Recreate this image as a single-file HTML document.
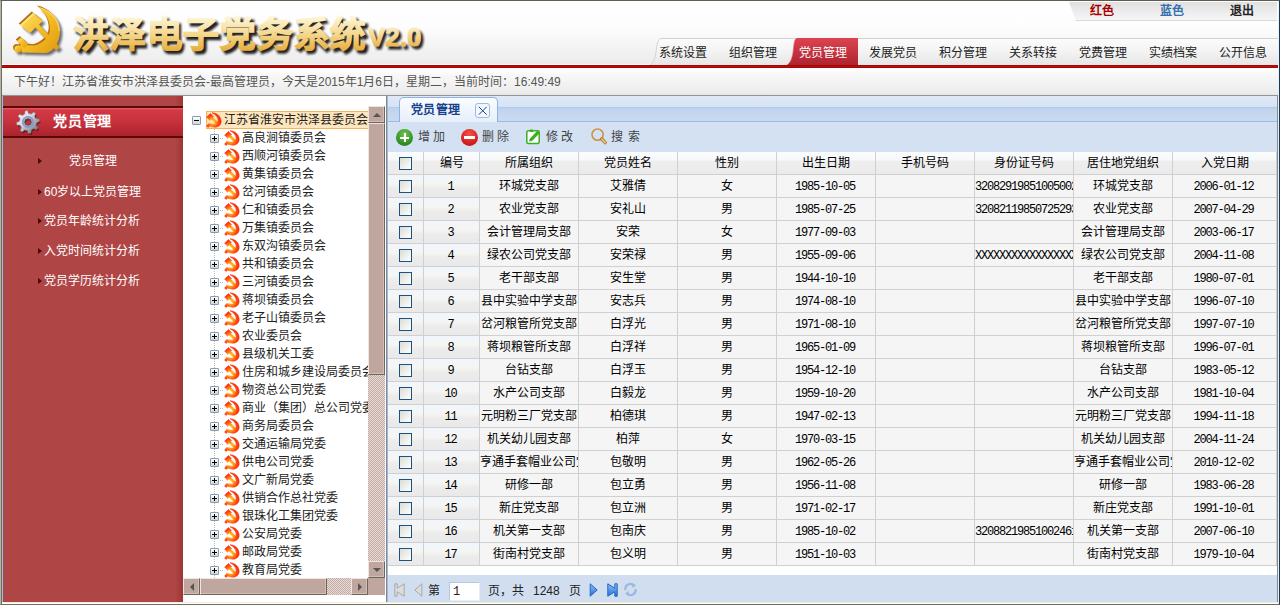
<!DOCTYPE html><html lang="zh-CN"><head><meta charset="utf-8"><style>*{margin:0;padding:0;box-sizing:border-box}
html,body{width:1280px;height:605px;overflow:hidden;background:#fff;font-family:"Liberation Sans",sans-serif;font-size:12px;color:#222}
div,span,i,b{position:absolute;display:block;font-style:normal}
#frame{left:0;top:0;width:1280px;height:605px;pointer-events:none;
 border-left:1px solid #b4b4a4;border-top:1px solid #5e5e50;border-right:1px solid #0a3c72;border-bottom:1px solid #6e6e60}
#frame:before{content:"";position:absolute;left:0;top:0;width:1px;height:604px;background:#6f6f60}
#hdr{left:1px;top:1px;width:1277px;height:64px;background:linear-gradient(#ffffff,#fdfdfd 40%,#ececec 98%,#fff 98%)}
#logo{left:8px;top:2px;width:60px;height:60px}
#toptab{left:0;top:0;width:1280px;height:24px}
#toptab .bg{left:1069px;top:2px;width:208px;height:19px;background:linear-gradient(#e0e0e0,#f6f6f6);border-bottom:1px solid #dadada;clip-path:polygon(0 0,100% 0,100% 100%,7px 100%)}
#toptab b{top:4px;font-size:12px;line-height:14px;font-weight:700}
#navbg{left:651px;top:38px;width:626px;height:27px;background:linear-gradient(#fbfbfb,#f2f2f2 50%,#e4e4e4);border-top:1px solid #d5d5d5;clip-path:polygon(6px 0,100% 0,100% 100%,0 100%)}
#navact{left:788px;top:38px;width:70px;height:27px;background:linear-gradient(#d9414b,#b2222c);clip-path:polygon(8px 0,100% 0,100% 100%,0 100%);border-radius:4px 0 0 0}
.nav{top:45.5px;font-size:12px;line-height:14px;color:#222;white-space:nowrap}
.nav.on{color:#fff}
#redline{left:2px;top:65px;width:1276px;height:3px;background:linear-gradient(#a60000,#b01010 50%,#a60000)}
#info{left:2px;top:68px;width:1276px;height:27px;background:linear-gradient(#ffffff,#f7f7f7 30%,#ededed 90%,#e4e4e4);padding-left:12px;line-height:29px;color:#555;font-size:12px;white-space:nowrap}
#infoline{left:2px;top:95px;width:1276px;height:1px;background:#959595}
#rline{left:1277px;top:95px;width:1px;height:507px;background:#8a8a8a}
#cream{left:1278px;top:1px;width:1px;height:603px;background:#f4efdc}
#bcream{left:2px;top:602px;width:1277px;height:1px;background:#f0ecd8}
#side{left:2px;top:96px;width:181px;height:506px;background:linear-gradient(90deg,rgba(0,0,0,0) 172px,rgba(90,0,10,0.22) 180px),#b04545;border-left:1px solid #99bbe8}
#side .hd{left:0;top:10px;width:180px;height:32px;background:linear-gradient(#e8606a,#d23a44 2px,#c6313b 50%,#aa232d);border-top:2px solid #5e0808;border-bottom:2px solid #5e0808}
#gear{left:15px;top:109px;width:26px;height:26px}
#sidetitle{left:53px;top:113px;letter-spacing:0.8px;font-size:14px;font-weight:700;color:#fff;line-height:16px;white-space:nowrap}
.arr{left:38px;width:4px;height:6px;background:#4a0a0a;clip-path:polygon(0 0,100% 50%,0 100%)}
.si{font-size:12px;color:#fff;line-height:14px;white-space:nowrap}
#tree{left:183px;top:96px;width:185px;height:482px;overflow:hidden;background:#fff}
.tb{width:9px;height:9px;border:1px solid #7f9db9;border-radius:1px;background:linear-gradient(#fff,#d8d4c8)}
.tb:before{content:"";position:absolute;left:1px;top:3px;width:5px;height:1px;background:#000}
.tb:after{content:"";position:absolute;left:3px;top:1px;width:1px;height:5px;background:#000}
.tb.minus:after{display:none}
.rootsel{left:23px;top:15px;width:190px;height:18px;background:#fde6bd;border:1px solid #f8b155}
.ic{width:16px;height:16px;margin-top:1px}
.tl{font-size:12px;line-height:20px;color:#222;white-space:nowrap}
.vdots{left:31px;top:33px;width:1px;height:460px;background:repeating-linear-gradient(#b8b8b8 0 1px,transparent 1px 2px)}
.hd2{left:37px;width:4px;height:1px;background:repeating-linear-gradient(90deg,#b8b8b8 0 1px,transparent 1px 2px)}
#vsb{left:368px;top:106px;width:17px;height:472px;background:repeating-conic-gradient(#c4aca5 0 25%,#e6dbd6 0 50%) 0 0/2px 2px}
#vsb .btn,#hsb .btn,#vsb .thumb,#hsb .thumb{background:#bfa69f;border:1px solid;border-color:#efe4de #6a665a #6a665a #efe4de;box-shadow:inset -1px -1px #d4bdb5}
#vsb .up{left:0;top:0;width:17px;height:17px}
#vsb .thumb{left:0;top:17px;width:17px;height:252px}
#vsb .dn{left:0;top:455px;width:17px;height:17px}
#hsb{left:183px;top:578px;width:185px;height:17px;background:repeating-conic-gradient(#c4aca5 0 25%,#e6dbd6 0 50%) 0 0/2px 2px}
#hsb .lf{left:0;top:0;width:17px;height:17px}
#hsb .thumb{left:17px;top:0;width:127px;height:17px}
#hsb .rt{left:168px;top:0;width:17px;height:17px}
#corner{left:368px;top:578px;width:17px;height:17px;background:#bfa69f}
.btn i{left:4px;top:6px;width:0;height:0;border:4px solid transparent}
.up i{border-bottom:4px solid #555;border-top:0;left:4px;top:6px}
.dn i{border-top:4px solid #555;border-bottom:0;left:4px;top:6px}
.lf i{border-right:4px solid #555;border-left:0;left:6px;top:4px}
.rt i{border-left:4px solid #555;border-right:0;left:6px;top:4px}
#treeline{left:385px;top:96px;width:1px;height:506px;background:#fff}
#main{left:386px;top:96px;width:891px;height:506px;background:#fff;border-left:1px solid #868686;}
#main:before{content:"";position:absolute;left:0;top:0;width:1px;height:506px;background:#99bbe8}
#tabstrip{left:1px;top:0;width:890px;height:26px;background:linear-gradient(#e0e9f6,#d6e2f3 11px,#a9c4e9 11px,#bcd1ed 12px,#c3d6ef 16px,#c9daf0 25px);border-bottom:1px solid #99bbe8}
#tab{left:12px;top:1px;width:99px;height:25px;border:1px solid #8db2e3;border-bottom:0;border-radius:5px 5px 0 0;background:linear-gradient(#fafcff,#e6effa)}
#tab span{left:11px;top:6px;letter-spacing:0.4px;font-size:12px;font-weight:700;color:#15428b;line-height:13px}
#tab .x{left:75px;top:5px;width:15px;height:15px;border:1px solid #99bbe8;border-radius:3px;background:#f4f8fd}
#tab .x svg{position:absolute;left:0;top:0}
#tbar{left:1px;top:26px;width:890px;height:30px;background:#d3e1f2}
#grid{left:388px;top:152px;width:889px;height:423px;background:#fff;overflow:hidden}
.gh{left:0;top:0;width:889px;height:23px;background:linear-gradient(#fbfcfd,#f6f8fa 36%,#eeeeee 42%,#ebebeb);border-bottom:1px solid #d0d0d0}
.gr{left:0;width:889px;height:23px;background:#f5f5f5;border-bottom:1px solid #d0d0d0}
.c{top:0;height:22px;border-right:1px solid #d0d0d0;text-align:center;line-height:22px;white-space:nowrap;overflow:hidden;color:#000}
.c span{position:relative;display:inline}
.c.num{font-family:"Liberation Mono",monospace;font-size:12px;letter-spacing:-1.2px}
.c.id{text-align:left;font-family:"Liberation Mono",monospace;font-size:12px;letter-spacing:-1.2px;overflow:hidden}
.cb{left:11px;top:5px;width:13px;height:13px;border:1px solid #1c5180;background:linear-gradient(135deg,#dcdcd4,#ffffff)}
#pager{left:388px;top:575px;width:889px;height:27px;background:#d0def0}
#tools span{white-space:nowrap}

.c.num span,.c.id span{top:1px}
.c.num span{left:-1px}

.gr .rn{background:linear-gradient(#f1f6fc,#f5f5f3 40%,#ececec 60%,#e9e9e9)}
</style></head><body>
<svg width="0" height="0" style="position:absolute"><defs><radialGradient id="hg" cx="0.42" cy="0.6" r="0.68"><stop offset="0" stop-color="#ffe030"/><stop offset="0.3" stop-color="#ff9a1a"/><stop offset="0.65" stop-color="#ff4010"/><stop offset="1" stop-color="#f01808"/></radialGradient></defs></svg>
<div id="hdr"></div>
<div id="logo"><svg width="60" height="60" viewBox="0 0 60 60"><defs><linearGradient id="lg" x1="0" y1="0" x2="1" y2="1"><stop offset="0" stop-color="#ffe068"/><stop offset="0.5" stop-color="#f4bc22"/><stop offset="1" stop-color="#e09810"/></linearGradient><filter id="lb"><feGaussianBlur stdDeviation="1.1"/></filter>
</defs>
<g transform="translate(2.5,2.5)" fill="#282838" opacity="0.65" filter="url(#lb)"><path d="M30,5 C42,7 52,17 52,29 C52,40 45,50 38,51 L14,50.5 L12,43 L27,43.5 C35,41 42,35 42,27 C42,18 37,10 30,5 Z"/><circle cx="10" cy="47" r="3.6"/><path d="M9,39 L13,35.5 L20,42 L16,46 Z"/>
<path d="M12,23 L25,11 L35,19 L31,22.5 L51.9,45.4 L48.1,48.6 L27.5,25.5 L22,31 Z"/></g>
<g transform="translate(-1.3,-1.5)" fill="#b87010"><path d="M30,5 C42,7 52,17 52,29 C52,40 45,50 38,51 L14,50.5 L12,43 L27,43.5 C35,41 42,35 42,27 C42,18 37,10 30,5 Z"/><circle cx="10" cy="47" r="3.6"/><path d="M9,39 L13,35.5 L20,42 L16,46 Z"/>
<path d="M12,23 L25,11 L35,19 L31,22.5 L51.9,45.4 L48.1,48.6 L27.5,25.5 L22,31 Z"/></g>
<g fill="url(#lg)"><path d="M30,5 C42,7 52,17 52,29 C52,40 45,50 38,51 L14,50.5 L12,43 L27,43.5 C35,41 42,35 42,27 C42,18 37,10 30,5 Z"/><circle cx="10" cy="47" r="3.6"/><path d="M9,39 L13,35.5 L20,42 L16,46 Z"/>
<path d="M12,23 L25,11 L35,19 L31,22.5 L51.9,45.4 L48.1,48.6 L27.5,25.5 L22,31 Z"/></g>
<path d="M12,23 L25,11 L26.5,12.2 L13.5,24.3Z" fill="#ffea90" opacity="0.8"/>
<path d="M30,5 C42,7 52,17 52,29 L50.5,29 C50.5,18 41,8 30,5Z" fill="#ffe890" opacity="0.6"/>
</svg>
</div>
<svg id="title" width="380" height="56" viewBox="0 0 380 56" style="position:absolute;left:60px;top:4px">
<defs><linearGradient id="tg" x1="0" y1="0" x2="0" y2="1"><stop offset="0.05" stop-color="#fdf6d8"/><stop offset="0.5" stop-color="#f4d68a"/><stop offset="0.95" stop-color="#e6a630"/></linearGradient>
<filter id="tb"><feGaussianBlur stdDeviation="0.8"/></filter></defs>
<g font-family="Liberation Sans, sans-serif" font-weight="700">
<g transform="translate(2.6,2.6)" fill="#202020" stroke="#202020" stroke-width="1.8" opacity="1" filter="url(#tb)">
<text x="13" y="43" font-size="35.5" letter-spacing="0.75">洪泽电子党务系统</text><text x="308" y="42" font-size="26" stroke-width="0.8">V2.0</text></g>
<g fill="url(#tg)" stroke="url(#tg)" stroke-width="1.4">
<text x="13" y="43" font-size="35.5" letter-spacing="0.75">洪泽电子党务系统</text><text x="308" y="42" font-size="26" stroke-width="0.8">V2.0</text></g>
</g></svg>

<div id="toptab"><div class="bg"></div><b style="left:1090px;color:#a80000">红色</b><b style="left:1160px;color:#3470b0">蓝色</b><b style="left:1230px;color:#222">退出</b></div>
<svg style="position:absolute;left:649px;top:38px" width="629" height="27" viewBox="0 0 629 27"><defs><linearGradient id="nbg" x1="0" y1="0" x2="0" y2="1"><stop offset="0" stop-color="#fcfcfc"/><stop offset="0.5" stop-color="#f3f3f3"/><stop offset="1" stop-color="#e6e6e6"/></linearGradient></defs><path d="M12,0.5 L629,0.5 L629,27 L1,27 C4,25 6,21 7,14 C8,6 9,1 12,0.5Z" fill="url(#nbg)"/><path d="M1,27 C4,25 6,21 7,14 C8,6 9,1 12,0.5 L629,0.5" fill="none" stroke="#d2d2d2" stroke-width="1"/></svg><svg style="position:absolute;left:786px;top:38px" width="72" height="27" viewBox="0 0 72 27"><defs><linearGradient id="ng" x1="0" y1="0" x2="0" y2="1"><stop offset="0" stop-color="#dc4450"/><stop offset="1" stop-color="#ae2430"/></linearGradient></defs><path d="M11,0 L72,0 L72,27 L1,27 C4,25 6,21 7,14 C8,6 8,1 11,0 Z" fill="url(#ng)"/><path d="M1,27 C4,25 6,21 7,14 C8,6 8,1 11,0" fill="none" stroke="#f07078" stroke-width="0.8" opacity="0.7"/></svg>
<span class="nav" style="left:659px">系统设置</span>
<span class="nav" style="left:729px">组织管理</span>
<span class="nav on" style="left:799px">党员管理</span>
<span class="nav" style="left:869px">发展党员</span>
<span class="nav" style="left:939px">积分管理</span>
<span class="nav" style="left:1009px">关系转接</span>
<span class="nav" style="left:1079px">党费管理</span>
<span class="nav" style="left:1149px">实绩档案</span>
<span class="nav" style="left:1219px">公开信息</span>
<div id="redline"></div>
<div id="info">下午好！江苏省淮安市洪泽县委员会-最高管理员，今天是2015年1月6日，星期二，当前时间：16:49:49</div>
<div id="infoline"></div>
<div id="side"><div class="hd"></div></div>
<div id="gear"><svg width="26" height="26" viewBox="0 0 26 26"><defs><linearGradient id="gg" x1="0" y1="0" x2="1" y2="1"><stop offset="0" stop-color="#ffffff"/><stop offset="0.45" stop-color="#d0d4dc"/><stop offset="1" stop-color="#5a606a"/></linearGradient></defs>
<g transform="translate(1,1.5)" opacity="0.5"><path fill="#200000" fill-rule="evenodd" d="M20.95,9.71 L24.11,10.01 L24.49,12.43 L21.57,13.69 L20.95,16.29 L22.96,18.74 L21.53,20.72 L18.58,19.55 L16.29,20.95 L15.99,24.11 L13.57,24.49 L12.31,21.57 L9.71,20.95 L7.26,22.96 L5.28,21.53 L6.45,18.58 L5.05,16.29 L1.89,15.99 L1.51,13.57 L4.43,12.31 L5.05,9.71 L3.04,7.26 L4.47,5.28 L7.42,6.45 L9.71,5.05 L10.01,1.89 L12.43,1.51 L13.69,4.43 L16.29,5.05 L18.74,3.04 L20.72,4.47 L19.55,7.42Z M16.30,13.00 A3.3,3.3 0 1 0 9.70,13.00 A3.3,3.3 0 1 0 16.30,13.00 Z"/></g>
<path fill="url(#gg)" fill-rule="evenodd" stroke="#7a8088" stroke-width="0.5" d="M20.95,9.71 L24.11,10.01 L24.49,12.43 L21.57,13.69 L20.95,16.29 L22.96,18.74 L21.53,20.72 L18.58,19.55 L16.29,20.95 L15.99,24.11 L13.57,24.49 L12.31,21.57 L9.71,20.95 L7.26,22.96 L5.28,21.53 L6.45,18.58 L5.05,16.29 L1.89,15.99 L1.51,13.57 L4.43,12.31 L5.05,9.71 L3.04,7.26 L4.47,5.28 L7.42,6.45 L9.71,5.05 L10.01,1.89 L12.43,1.51 L13.69,4.43 L16.29,5.05 L18.74,3.04 L20.72,4.47 L19.55,7.42Z M16.30,13.00 A3.3,3.3 0 1 0 9.70,13.00 A3.3,3.3 0 1 0 16.30,13.00 Z"/>
<circle cx="13" cy="13" r="5.2" fill="none" stroke="#8a98c8" stroke-width="1.8"/>
<circle cx="13" cy="13" r="3.3" fill="none" stroke="#404858" stroke-width="0.7"/></svg></div>
<div id="sidetitle">党员管理</div>
<i class="arr" style="top:158px"></i><span class="si" style="left:69px;top:154px">党员管理</span>
<i class="arr" style="top:189px"></i><span class="si" style="left:44px;top:185px">60岁以上党员管理</span>
<i class="arr" style="top:218px"></i><span class="si" style="left:44px;top:214px">党员年龄统计分析</span>
<i class="arr" style="top:248px"></i><span class="si" style="left:44px;top:244px">入党时间统计分析</span>
<i class="arr" style="top:278px"></i><span class="si" style="left:44px;top:274px">党员学历统计分析</span>
<div id="tree">
<div class="tb minus" style="left:9px;top:20px"></div>
<div class="rootsel"></div>
<div class="ic" style="left:23px;top:15px"><svg width="16" height="16" viewBox="0 0 16 16"><path fill="url(#hg)" stroke="url(#hg)" stroke-width="0.5" d="M6,0.8 C11,0.8 15.2,4.5 15.2,9.5 C15.2,13.2 12,15.3 8.5,15.3 L3.5,14.3 L2,15.5 L0.6,14 L2.5,11.6 L7.8,12 C10.3,12 12,10.3 12,8.3 C12,5.2 9.5,2.5 6,0.8Z M0.6,5 L4.5,1.6 L7.7,4.6 L6.8,5.5 L13.3,11.7 L11.5,13.4 L5,7.1 L3.8,8.4Z"/></svg>
</div>
<span class="tl" style="left:41px;top:14px">江苏省淮安市洪泽县委员会</span>
<div class="vdots"></div>
<div class="tb" style="left:27px;top:38px"></div><div class="hd2" style="top:42px"></div>
<div class="ic" style="left:41px;top:33px"><svg width="16" height="16" viewBox="0 0 16 16"><path fill="url(#hg)" stroke="url(#hg)" stroke-width="0.5" d="M6,0.8 C11,0.8 15.2,4.5 15.2,9.5 C15.2,13.2 12,15.3 8.5,15.3 L3.5,14.3 L2,15.5 L0.6,14 L2.5,11.6 L7.8,12 C10.3,12 12,10.3 12,8.3 C12,5.2 9.5,2.5 6,0.8Z M0.6,5 L4.5,1.6 L7.7,4.6 L6.8,5.5 L13.3,11.7 L11.5,13.4 L5,7.1 L3.8,8.4Z"/></svg>
</div>
<span class="tl" style="left:59px;top:32px">高良涧镇委员会</span>
<div class="tb" style="left:27px;top:56px"></div><div class="hd2" style="top:60px"></div>
<div class="ic" style="left:41px;top:51px"><svg width="16" height="16" viewBox="0 0 16 16"><path fill="url(#hg)" stroke="url(#hg)" stroke-width="0.5" d="M6,0.8 C11,0.8 15.2,4.5 15.2,9.5 C15.2,13.2 12,15.3 8.5,15.3 L3.5,14.3 L2,15.5 L0.6,14 L2.5,11.6 L7.8,12 C10.3,12 12,10.3 12,8.3 C12,5.2 9.5,2.5 6,0.8Z M0.6,5 L4.5,1.6 L7.7,4.6 L6.8,5.5 L13.3,11.7 L11.5,13.4 L5,7.1 L3.8,8.4Z"/></svg>
</div>
<span class="tl" style="left:59px;top:50px">西顺河镇委员会</span>
<div class="tb" style="left:27px;top:74px"></div><div class="hd2" style="top:78px"></div>
<div class="ic" style="left:41px;top:69px"><svg width="16" height="16" viewBox="0 0 16 16"><path fill="url(#hg)" stroke="url(#hg)" stroke-width="0.5" d="M6,0.8 C11,0.8 15.2,4.5 15.2,9.5 C15.2,13.2 12,15.3 8.5,15.3 L3.5,14.3 L2,15.5 L0.6,14 L2.5,11.6 L7.8,12 C10.3,12 12,10.3 12,8.3 C12,5.2 9.5,2.5 6,0.8Z M0.6,5 L4.5,1.6 L7.7,4.6 L6.8,5.5 L13.3,11.7 L11.5,13.4 L5,7.1 L3.8,8.4Z"/></svg>
</div>
<span class="tl" style="left:59px;top:68px">黄集镇委员会</span>
<div class="tb" style="left:27px;top:92px"></div><div class="hd2" style="top:96px"></div>
<div class="ic" style="left:41px;top:87px"><svg width="16" height="16" viewBox="0 0 16 16"><path fill="url(#hg)" stroke="url(#hg)" stroke-width="0.5" d="M6,0.8 C11,0.8 15.2,4.5 15.2,9.5 C15.2,13.2 12,15.3 8.5,15.3 L3.5,14.3 L2,15.5 L0.6,14 L2.5,11.6 L7.8,12 C10.3,12 12,10.3 12,8.3 C12,5.2 9.5,2.5 6,0.8Z M0.6,5 L4.5,1.6 L7.7,4.6 L6.8,5.5 L13.3,11.7 L11.5,13.4 L5,7.1 L3.8,8.4Z"/></svg>
</div>
<span class="tl" style="left:59px;top:86px">岔河镇委员会</span>
<div class="tb" style="left:27px;top:110px"></div><div class="hd2" style="top:114px"></div>
<div class="ic" style="left:41px;top:105px"><svg width="16" height="16" viewBox="0 0 16 16"><path fill="url(#hg)" stroke="url(#hg)" stroke-width="0.5" d="M6,0.8 C11,0.8 15.2,4.5 15.2,9.5 C15.2,13.2 12,15.3 8.5,15.3 L3.5,14.3 L2,15.5 L0.6,14 L2.5,11.6 L7.8,12 C10.3,12 12,10.3 12,8.3 C12,5.2 9.5,2.5 6,0.8Z M0.6,5 L4.5,1.6 L7.7,4.6 L6.8,5.5 L13.3,11.7 L11.5,13.4 L5,7.1 L3.8,8.4Z"/></svg>
</div>
<span class="tl" style="left:59px;top:104px">仁和镇委员会</span>
<div class="tb" style="left:27px;top:128px"></div><div class="hd2" style="top:132px"></div>
<div class="ic" style="left:41px;top:123px"><svg width="16" height="16" viewBox="0 0 16 16"><path fill="url(#hg)" stroke="url(#hg)" stroke-width="0.5" d="M6,0.8 C11,0.8 15.2,4.5 15.2,9.5 C15.2,13.2 12,15.3 8.5,15.3 L3.5,14.3 L2,15.5 L0.6,14 L2.5,11.6 L7.8,12 C10.3,12 12,10.3 12,8.3 C12,5.2 9.5,2.5 6,0.8Z M0.6,5 L4.5,1.6 L7.7,4.6 L6.8,5.5 L13.3,11.7 L11.5,13.4 L5,7.1 L3.8,8.4Z"/></svg>
</div>
<span class="tl" style="left:59px;top:122px">万集镇委员会</span>
<div class="tb" style="left:27px;top:146px"></div><div class="hd2" style="top:150px"></div>
<div class="ic" style="left:41px;top:141px"><svg width="16" height="16" viewBox="0 0 16 16"><path fill="url(#hg)" stroke="url(#hg)" stroke-width="0.5" d="M6,0.8 C11,0.8 15.2,4.5 15.2,9.5 C15.2,13.2 12,15.3 8.5,15.3 L3.5,14.3 L2,15.5 L0.6,14 L2.5,11.6 L7.8,12 C10.3,12 12,10.3 12,8.3 C12,5.2 9.5,2.5 6,0.8Z M0.6,5 L4.5,1.6 L7.7,4.6 L6.8,5.5 L13.3,11.7 L11.5,13.4 L5,7.1 L3.8,8.4Z"/></svg>
</div>
<span class="tl" style="left:59px;top:140px">东双沟镇委员会</span>
<div class="tb" style="left:27px;top:164px"></div><div class="hd2" style="top:168px"></div>
<div class="ic" style="left:41px;top:159px"><svg width="16" height="16" viewBox="0 0 16 16"><path fill="url(#hg)" stroke="url(#hg)" stroke-width="0.5" d="M6,0.8 C11,0.8 15.2,4.5 15.2,9.5 C15.2,13.2 12,15.3 8.5,15.3 L3.5,14.3 L2,15.5 L0.6,14 L2.5,11.6 L7.8,12 C10.3,12 12,10.3 12,8.3 C12,5.2 9.5,2.5 6,0.8Z M0.6,5 L4.5,1.6 L7.7,4.6 L6.8,5.5 L13.3,11.7 L11.5,13.4 L5,7.1 L3.8,8.4Z"/></svg>
</div>
<span class="tl" style="left:59px;top:158px">共和镇委员会</span>
<div class="tb" style="left:27px;top:182px"></div><div class="hd2" style="top:186px"></div>
<div class="ic" style="left:41px;top:177px"><svg width="16" height="16" viewBox="0 0 16 16"><path fill="url(#hg)" stroke="url(#hg)" stroke-width="0.5" d="M6,0.8 C11,0.8 15.2,4.5 15.2,9.5 C15.2,13.2 12,15.3 8.5,15.3 L3.5,14.3 L2,15.5 L0.6,14 L2.5,11.6 L7.8,12 C10.3,12 12,10.3 12,8.3 C12,5.2 9.5,2.5 6,0.8Z M0.6,5 L4.5,1.6 L7.7,4.6 L6.8,5.5 L13.3,11.7 L11.5,13.4 L5,7.1 L3.8,8.4Z"/></svg>
</div>
<span class="tl" style="left:59px;top:176px">三河镇委员会</span>
<div class="tb" style="left:27px;top:200px"></div><div class="hd2" style="top:204px"></div>
<div class="ic" style="left:41px;top:195px"><svg width="16" height="16" viewBox="0 0 16 16"><path fill="url(#hg)" stroke="url(#hg)" stroke-width="0.5" d="M6,0.8 C11,0.8 15.2,4.5 15.2,9.5 C15.2,13.2 12,15.3 8.5,15.3 L3.5,14.3 L2,15.5 L0.6,14 L2.5,11.6 L7.8,12 C10.3,12 12,10.3 12,8.3 C12,5.2 9.5,2.5 6,0.8Z M0.6,5 L4.5,1.6 L7.7,4.6 L6.8,5.5 L13.3,11.7 L11.5,13.4 L5,7.1 L3.8,8.4Z"/></svg>
</div>
<span class="tl" style="left:59px;top:194px">蒋坝镇委员会</span>
<div class="tb" style="left:27px;top:218px"></div><div class="hd2" style="top:222px"></div>
<div class="ic" style="left:41px;top:213px"><svg width="16" height="16" viewBox="0 0 16 16"><path fill="url(#hg)" stroke="url(#hg)" stroke-width="0.5" d="M6,0.8 C11,0.8 15.2,4.5 15.2,9.5 C15.2,13.2 12,15.3 8.5,15.3 L3.5,14.3 L2,15.5 L0.6,14 L2.5,11.6 L7.8,12 C10.3,12 12,10.3 12,8.3 C12,5.2 9.5,2.5 6,0.8Z M0.6,5 L4.5,1.6 L7.7,4.6 L6.8,5.5 L13.3,11.7 L11.5,13.4 L5,7.1 L3.8,8.4Z"/></svg>
</div>
<span class="tl" style="left:59px;top:212px">老子山镇委员会</span>
<div class="tb" style="left:27px;top:236px"></div><div class="hd2" style="top:240px"></div>
<div class="ic" style="left:41px;top:231px"><svg width="16" height="16" viewBox="0 0 16 16"><path fill="url(#hg)" stroke="url(#hg)" stroke-width="0.5" d="M6,0.8 C11,0.8 15.2,4.5 15.2,9.5 C15.2,13.2 12,15.3 8.5,15.3 L3.5,14.3 L2,15.5 L0.6,14 L2.5,11.6 L7.8,12 C10.3,12 12,10.3 12,8.3 C12,5.2 9.5,2.5 6,0.8Z M0.6,5 L4.5,1.6 L7.7,4.6 L6.8,5.5 L13.3,11.7 L11.5,13.4 L5,7.1 L3.8,8.4Z"/></svg>
</div>
<span class="tl" style="left:59px;top:230px">农业委员会</span>
<div class="tb" style="left:27px;top:254px"></div><div class="hd2" style="top:258px"></div>
<div class="ic" style="left:41px;top:249px"><svg width="16" height="16" viewBox="0 0 16 16"><path fill="url(#hg)" stroke="url(#hg)" stroke-width="0.5" d="M6,0.8 C11,0.8 15.2,4.5 15.2,9.5 C15.2,13.2 12,15.3 8.5,15.3 L3.5,14.3 L2,15.5 L0.6,14 L2.5,11.6 L7.8,12 C10.3,12 12,10.3 12,8.3 C12,5.2 9.5,2.5 6,0.8Z M0.6,5 L4.5,1.6 L7.7,4.6 L6.8,5.5 L13.3,11.7 L11.5,13.4 L5,7.1 L3.8,8.4Z"/></svg>
</div>
<span class="tl" style="left:59px;top:248px">县级机关工委</span>
<div class="tb" style="left:27px;top:272px"></div><div class="hd2" style="top:276px"></div>
<div class="ic" style="left:41px;top:267px"><svg width="16" height="16" viewBox="0 0 16 16"><path fill="url(#hg)" stroke="url(#hg)" stroke-width="0.5" d="M6,0.8 C11,0.8 15.2,4.5 15.2,9.5 C15.2,13.2 12,15.3 8.5,15.3 L3.5,14.3 L2,15.5 L0.6,14 L2.5,11.6 L7.8,12 C10.3,12 12,10.3 12,8.3 C12,5.2 9.5,2.5 6,0.8Z M0.6,5 L4.5,1.6 L7.7,4.6 L6.8,5.5 L13.3,11.7 L11.5,13.4 L5,7.1 L3.8,8.4Z"/></svg>
</div>
<span class="tl" style="left:59px;top:266px">住房和城乡建设局委员会</span>
<div class="tb" style="left:27px;top:290px"></div><div class="hd2" style="top:294px"></div>
<div class="ic" style="left:41px;top:285px"><svg width="16" height="16" viewBox="0 0 16 16"><path fill="url(#hg)" stroke="url(#hg)" stroke-width="0.5" d="M6,0.8 C11,0.8 15.2,4.5 15.2,9.5 C15.2,13.2 12,15.3 8.5,15.3 L3.5,14.3 L2,15.5 L0.6,14 L2.5,11.6 L7.8,12 C10.3,12 12,10.3 12,8.3 C12,5.2 9.5,2.5 6,0.8Z M0.6,5 L4.5,1.6 L7.7,4.6 L6.8,5.5 L13.3,11.7 L11.5,13.4 L5,7.1 L3.8,8.4Z"/></svg>
</div>
<span class="tl" style="left:59px;top:284px">物资总公司党委</span>
<div class="tb" style="left:27px;top:308px"></div><div class="hd2" style="top:312px"></div>
<div class="ic" style="left:41px;top:303px"><svg width="16" height="16" viewBox="0 0 16 16"><path fill="url(#hg)" stroke="url(#hg)" stroke-width="0.5" d="M6,0.8 C11,0.8 15.2,4.5 15.2,9.5 C15.2,13.2 12,15.3 8.5,15.3 L3.5,14.3 L2,15.5 L0.6,14 L2.5,11.6 L7.8,12 C10.3,12 12,10.3 12,8.3 C12,5.2 9.5,2.5 6,0.8Z M0.6,5 L4.5,1.6 L7.7,4.6 L6.8,5.5 L13.3,11.7 L11.5,13.4 L5,7.1 L3.8,8.4Z"/></svg>
</div>
<span class="tl" style="left:59px;top:302px">商业（集团）总公司党委</span>
<div class="tb" style="left:27px;top:326px"></div><div class="hd2" style="top:330px"></div>
<div class="ic" style="left:41px;top:321px"><svg width="16" height="16" viewBox="0 0 16 16"><path fill="url(#hg)" stroke="url(#hg)" stroke-width="0.5" d="M6,0.8 C11,0.8 15.2,4.5 15.2,9.5 C15.2,13.2 12,15.3 8.5,15.3 L3.5,14.3 L2,15.5 L0.6,14 L2.5,11.6 L7.8,12 C10.3,12 12,10.3 12,8.3 C12,5.2 9.5,2.5 6,0.8Z M0.6,5 L4.5,1.6 L7.7,4.6 L6.8,5.5 L13.3,11.7 L11.5,13.4 L5,7.1 L3.8,8.4Z"/></svg>
</div>
<span class="tl" style="left:59px;top:320px">商务局委员会</span>
<div class="tb" style="left:27px;top:344px"></div><div class="hd2" style="top:348px"></div>
<div class="ic" style="left:41px;top:339px"><svg width="16" height="16" viewBox="0 0 16 16"><path fill="url(#hg)" stroke="url(#hg)" stroke-width="0.5" d="M6,0.8 C11,0.8 15.2,4.5 15.2,9.5 C15.2,13.2 12,15.3 8.5,15.3 L3.5,14.3 L2,15.5 L0.6,14 L2.5,11.6 L7.8,12 C10.3,12 12,10.3 12,8.3 C12,5.2 9.5,2.5 6,0.8Z M0.6,5 L4.5,1.6 L7.7,4.6 L6.8,5.5 L13.3,11.7 L11.5,13.4 L5,7.1 L3.8,8.4Z"/></svg>
</div>
<span class="tl" style="left:59px;top:338px">交通运输局党委</span>
<div class="tb" style="left:27px;top:362px"></div><div class="hd2" style="top:366px"></div>
<div class="ic" style="left:41px;top:357px"><svg width="16" height="16" viewBox="0 0 16 16"><path fill="url(#hg)" stroke="url(#hg)" stroke-width="0.5" d="M6,0.8 C11,0.8 15.2,4.5 15.2,9.5 C15.2,13.2 12,15.3 8.5,15.3 L3.5,14.3 L2,15.5 L0.6,14 L2.5,11.6 L7.8,12 C10.3,12 12,10.3 12,8.3 C12,5.2 9.5,2.5 6,0.8Z M0.6,5 L4.5,1.6 L7.7,4.6 L6.8,5.5 L13.3,11.7 L11.5,13.4 L5,7.1 L3.8,8.4Z"/></svg>
</div>
<span class="tl" style="left:59px;top:356px">供电公司党委</span>
<div class="tb" style="left:27px;top:380px"></div><div class="hd2" style="top:384px"></div>
<div class="ic" style="left:41px;top:375px"><svg width="16" height="16" viewBox="0 0 16 16"><path fill="url(#hg)" stroke="url(#hg)" stroke-width="0.5" d="M6,0.8 C11,0.8 15.2,4.5 15.2,9.5 C15.2,13.2 12,15.3 8.5,15.3 L3.5,14.3 L2,15.5 L0.6,14 L2.5,11.6 L7.8,12 C10.3,12 12,10.3 12,8.3 C12,5.2 9.5,2.5 6,0.8Z M0.6,5 L4.5,1.6 L7.7,4.6 L6.8,5.5 L13.3,11.7 L11.5,13.4 L5,7.1 L3.8,8.4Z"/></svg>
</div>
<span class="tl" style="left:59px;top:374px">文广新局党委</span>
<div class="tb" style="left:27px;top:398px"></div><div class="hd2" style="top:402px"></div>
<div class="ic" style="left:41px;top:393px"><svg width="16" height="16" viewBox="0 0 16 16"><path fill="url(#hg)" stroke="url(#hg)" stroke-width="0.5" d="M6,0.8 C11,0.8 15.2,4.5 15.2,9.5 C15.2,13.2 12,15.3 8.5,15.3 L3.5,14.3 L2,15.5 L0.6,14 L2.5,11.6 L7.8,12 C10.3,12 12,10.3 12,8.3 C12,5.2 9.5,2.5 6,0.8Z M0.6,5 L4.5,1.6 L7.7,4.6 L6.8,5.5 L13.3,11.7 L11.5,13.4 L5,7.1 L3.8,8.4Z"/></svg>
</div>
<span class="tl" style="left:59px;top:392px">供销合作总社党委</span>
<div class="tb" style="left:27px;top:416px"></div><div class="hd2" style="top:420px"></div>
<div class="ic" style="left:41px;top:411px"><svg width="16" height="16" viewBox="0 0 16 16"><path fill="url(#hg)" stroke="url(#hg)" stroke-width="0.5" d="M6,0.8 C11,0.8 15.2,4.5 15.2,9.5 C15.2,13.2 12,15.3 8.5,15.3 L3.5,14.3 L2,15.5 L0.6,14 L2.5,11.6 L7.8,12 C10.3,12 12,10.3 12,8.3 C12,5.2 9.5,2.5 6,0.8Z M0.6,5 L4.5,1.6 L7.7,4.6 L6.8,5.5 L13.3,11.7 L11.5,13.4 L5,7.1 L3.8,8.4Z"/></svg>
</div>
<span class="tl" style="left:59px;top:410px">银珠化工集团党委</span>
<div class="tb" style="left:27px;top:434px"></div><div class="hd2" style="top:438px"></div>
<div class="ic" style="left:41px;top:429px"><svg width="16" height="16" viewBox="0 0 16 16"><path fill="url(#hg)" stroke="url(#hg)" stroke-width="0.5" d="M6,0.8 C11,0.8 15.2,4.5 15.2,9.5 C15.2,13.2 12,15.3 8.5,15.3 L3.5,14.3 L2,15.5 L0.6,14 L2.5,11.6 L7.8,12 C10.3,12 12,10.3 12,8.3 C12,5.2 9.5,2.5 6,0.8Z M0.6,5 L4.5,1.6 L7.7,4.6 L6.8,5.5 L13.3,11.7 L11.5,13.4 L5,7.1 L3.8,8.4Z"/></svg>
</div>
<span class="tl" style="left:59px;top:428px">公安局党委</span>
<div class="tb" style="left:27px;top:452px"></div><div class="hd2" style="top:456px"></div>
<div class="ic" style="left:41px;top:447px"><svg width="16" height="16" viewBox="0 0 16 16"><path fill="url(#hg)" stroke="url(#hg)" stroke-width="0.5" d="M6,0.8 C11,0.8 15.2,4.5 15.2,9.5 C15.2,13.2 12,15.3 8.5,15.3 L3.5,14.3 L2,15.5 L0.6,14 L2.5,11.6 L7.8,12 C10.3,12 12,10.3 12,8.3 C12,5.2 9.5,2.5 6,0.8Z M0.6,5 L4.5,1.6 L7.7,4.6 L6.8,5.5 L13.3,11.7 L11.5,13.4 L5,7.1 L3.8,8.4Z"/></svg>
</div>
<span class="tl" style="left:59px;top:446px">邮政局党委</span>
<div class="tb" style="left:27px;top:470px"></div><div class="hd2" style="top:474px"></div>
<div class="ic" style="left:41px;top:465px"><svg width="16" height="16" viewBox="0 0 16 16"><path fill="url(#hg)" stroke="url(#hg)" stroke-width="0.5" d="M6,0.8 C11,0.8 15.2,4.5 15.2,9.5 C15.2,13.2 12,15.3 8.5,15.3 L3.5,14.3 L2,15.5 L0.6,14 L2.5,11.6 L7.8,12 C10.3,12 12,10.3 12,8.3 C12,5.2 9.5,2.5 6,0.8Z M0.6,5 L4.5,1.6 L7.7,4.6 L6.8,5.5 L13.3,11.7 L11.5,13.4 L5,7.1 L3.8,8.4Z"/></svg>
</div>
<span class="tl" style="left:59px;top:464px">教育局党委</span>
</div>
<div id="vsb"><div class="btn up"><i></i></div><div class="thumb"></div><div class="btn dn"><i></i></div></div>
<div id="hsb"><div class="btn lf"><i></i></div><div class="thumb"></div><div class="btn rt"><i></i></div></div><div id="corner"></div>
<div id="treeline"></div>
<div id="main">
<div id="tabstrip"></div><div id="tab"><span>党员管理</span><div class="x"><svg width="14" height="14" viewBox="0 0 14 14"><path d="M2.8 2.8L10.7 10.7M10.7 2.8L2.8 10.7" stroke="#15428b" stroke-width="1"/></svg></div></div>
<div id="tbar"></div>
</div>
<div id="tools">
<div style="left:396px;top:129px;width:17px;height:17px;border-radius:50%;background:radial-gradient(circle at 50% 30%,#72c450,#2c8c22 70%,#1d6a15)"><i style="left:4px;top:7.5px;width:9px;height:2px;background:#fff"></i><i style="left:7.5px;top:4px;width:2px;height:9px;background:#fff"></i></div>
<span style="left:418px;top:130px;font-size:12px;line-height:14px;color:#444;letter-spacing:3px">增加</span>
<div style="left:461px;top:129px;width:17px;height:17px;border-radius:50%;background:radial-gradient(circle at 50% 30%,#f25444,#d21a1a 70%,#b01010)"><i style="left:3px;top:7px;width:11px;height:3px;background:#fff"></i></div>
<span style="left:482px;top:130px;font-size:12px;line-height:14px;color:#444;letter-spacing:3px">删除</span>
<div style="left:525px;top:128px;width:17px;height:17px"><svg width="17" height="17" viewBox="0 0 17 17"><rect x="1.8" y="2.8" width="12.4" height="12.6" rx="1.5" fill="#fff" stroke="#3cae22" stroke-width="1.5"/><path d="M4 13.5 L4.8 10.8 L12.5 2.5 L15 4.8 L7 13 Z" fill="#3cae22"/><rect x="5" y="1.5" width="3" height="2.5" fill="#3cae22"/></svg></div>
<span style="left:546px;top:130px;font-size:12px;line-height:14px;color:#444;letter-spacing:3px">修改</span>
<div style="left:590px;top:127px;width:18px;height:18px"><svg width="18" height="18" viewBox="0 0 18 18"><circle cx="7.6" cy="7.6" r="5.6" fill="none" stroke="#cc9440" stroke-width="1.6"/><path d="M11.8 12 L15.2 15.6" stroke="#b07830" stroke-width="3.4" stroke-linecap="round"/><path d="M11.8 12 L15.2 15.6" stroke="#f0c888" stroke-width="1.6" stroke-linecap="round"/></svg></div>
<span style="left:611px;top:130px;font-size:12px;line-height:14px;color:#444;letter-spacing:5px">搜索</span>
</div>

<div id="grid">
<div class="gh"><div class="c" style="left:0px;width:36px"><i class="cb"></i></div><div class="c" style="left:36px;width:56px">编号</div><div class="c" style="left:92px;width:99px">所属组织</div><div class="c" style="left:191px;width:99px">党员姓名</div><div class="c" style="left:290px;width:99px">性别</div><div class="c" style="left:389px;width:99px">出生日期</div><div class="c" style="left:488px;width:99px">手机号码</div><div class="c" style="left:587px;width:99px">身份证号码</div><div class="c" style="left:686px;width:99px">居住地党组织</div><div class="c" style="left:785px;width:104px">入党日期</div></div>
<div class="gr" style="top:23px"><div class="c rn" style="left:0px;width:36px"><i class="cb"></i></div><div class="c num rn" style="left:36px;width:56px"><span>1</span></div><div class="c" style="left:92px;width:99px"><span>环城党支部</span></div><div class="c" style="left:191px;width:99px"><span>艾雅倩</span></div><div class="c" style="left:290px;width:99px"><span>女</span></div><div class="c num" style="left:389px;width:99px"><span>1985-10-05</span></div><div class="c" style="left:488px;width:99px"><span></span></div><div class="c id" style="left:587px;width:99px"><span>320829198510050021</span></div><div class="c" style="left:686px;width:99px"><span>环城党支部</span></div><div class="c num" style="left:785px;width:104px"><span>2006-01-12</span></div></div>
<div class="gr" style="top:46px"><div class="c rn" style="left:0px;width:36px"><i class="cb"></i></div><div class="c num rn" style="left:36px;width:56px"><span>2</span></div><div class="c" style="left:92px;width:99px"><span>农业党支部</span></div><div class="c" style="left:191px;width:99px"><span>安礼山</span></div><div class="c" style="left:290px;width:99px"><span>男</span></div><div class="c num" style="left:389px;width:99px"><span>1985-07-25</span></div><div class="c" style="left:488px;width:99px"><span></span></div><div class="c id" style="left:587px;width:99px"><span>320821198507252934</span></div><div class="c" style="left:686px;width:99px"><span>农业党支部</span></div><div class="c num" style="left:785px;width:104px"><span>2007-04-29</span></div></div>
<div class="gr" style="top:69px"><div class="c rn" style="left:0px;width:36px"><i class="cb"></i></div><div class="c num rn" style="left:36px;width:56px"><span>3</span></div><div class="c" style="left:92px;width:99px"><span>会计管理局支部</span></div><div class="c" style="left:191px;width:99px"><span>安荣</span></div><div class="c" style="left:290px;width:99px"><span>女</span></div><div class="c num" style="left:389px;width:99px"><span>1977-09-03</span></div><div class="c" style="left:488px;width:99px"><span></span></div><div class="c id" style="left:587px;width:99px"><span></span></div><div class="c" style="left:686px;width:99px"><span>会计管理局支部</span></div><div class="c num" style="left:785px;width:104px"><span>2003-06-17</span></div></div>
<div class="gr" style="top:92px"><div class="c rn" style="left:0px;width:36px"><i class="cb"></i></div><div class="c num rn" style="left:36px;width:56px"><span>4</span></div><div class="c" style="left:92px;width:99px"><span>绿农公司党支部</span></div><div class="c" style="left:191px;width:99px"><span>安荣禄</span></div><div class="c" style="left:290px;width:99px"><span>男</span></div><div class="c num" style="left:389px;width:99px"><span>1955-09-06</span></div><div class="c" style="left:488px;width:99px"><span></span></div><div class="c id" style="left:587px;width:99px"><span>XXXXXXXXXXXXXXXXXX</span></div><div class="c" style="left:686px;width:99px"><span>绿农公司党支部</span></div><div class="c num" style="left:785px;width:104px"><span>2004-11-08</span></div></div>
<div class="gr" style="top:115px"><div class="c rn" style="left:0px;width:36px"><i class="cb"></i></div><div class="c num rn" style="left:36px;width:56px"><span>5</span></div><div class="c" style="left:92px;width:99px"><span>老干部支部</span></div><div class="c" style="left:191px;width:99px"><span>安生堂</span></div><div class="c" style="left:290px;width:99px"><span>男</span></div><div class="c num" style="left:389px;width:99px"><span>1944-10-10</span></div><div class="c" style="left:488px;width:99px"><span></span></div><div class="c id" style="left:587px;width:99px"><span></span></div><div class="c" style="left:686px;width:99px"><span>老干部支部</span></div><div class="c num" style="left:785px;width:104px"><span>1980-07-01</span></div></div>
<div class="gr" style="top:138px"><div class="c rn" style="left:0px;width:36px"><i class="cb"></i></div><div class="c num rn" style="left:36px;width:56px"><span>6</span></div><div class="c" style="left:92px;width:99px"><span>县中实验中学支部</span></div><div class="c" style="left:191px;width:99px"><span>安志兵</span></div><div class="c" style="left:290px;width:99px"><span>男</span></div><div class="c num" style="left:389px;width:99px"><span>1974-08-10</span></div><div class="c" style="left:488px;width:99px"><span></span></div><div class="c id" style="left:587px;width:99px"><span></span></div><div class="c" style="left:686px;width:99px"><span>县中实验中学支部</span></div><div class="c num" style="left:785px;width:104px"><span>1996-07-10</span></div></div>
<div class="gr" style="top:161px"><div class="c rn" style="left:0px;width:36px"><i class="cb"></i></div><div class="c num rn" style="left:36px;width:56px"><span>7</span></div><div class="c" style="left:92px;width:99px"><span>岔河粮管所党支部</span></div><div class="c" style="left:191px;width:99px"><span>白浮光</span></div><div class="c" style="left:290px;width:99px"><span>男</span></div><div class="c num" style="left:389px;width:99px"><span>1971-08-10</span></div><div class="c" style="left:488px;width:99px"><span></span></div><div class="c id" style="left:587px;width:99px"><span></span></div><div class="c" style="left:686px;width:99px"><span>岔河粮管所党支部</span></div><div class="c num" style="left:785px;width:104px"><span>1997-07-10</span></div></div>
<div class="gr" style="top:184px"><div class="c rn" style="left:0px;width:36px"><i class="cb"></i></div><div class="c num rn" style="left:36px;width:56px"><span>8</span></div><div class="c" style="left:92px;width:99px"><span>蒋坝粮管所支部</span></div><div class="c" style="left:191px;width:99px"><span>白浮祥</span></div><div class="c" style="left:290px;width:99px"><span>男</span></div><div class="c num" style="left:389px;width:99px"><span>1965-01-09</span></div><div class="c" style="left:488px;width:99px"><span></span></div><div class="c id" style="left:587px;width:99px"><span></span></div><div class="c" style="left:686px;width:99px"><span>蒋坝粮管所支部</span></div><div class="c num" style="left:785px;width:104px"><span>1996-07-01</span></div></div>
<div class="gr" style="top:207px"><div class="c rn" style="left:0px;width:36px"><i class="cb"></i></div><div class="c num rn" style="left:36px;width:56px"><span>9</span></div><div class="c" style="left:92px;width:99px"><span>台钻支部</span></div><div class="c" style="left:191px;width:99px"><span>白浮玉</span></div><div class="c" style="left:290px;width:99px"><span>男</span></div><div class="c num" style="left:389px;width:99px"><span>1954-12-10</span></div><div class="c" style="left:488px;width:99px"><span></span></div><div class="c id" style="left:587px;width:99px"><span></span></div><div class="c" style="left:686px;width:99px"><span>台钻支部</span></div><div class="c num" style="left:785px;width:104px"><span>1983-05-12</span></div></div>
<div class="gr" style="top:230px"><div class="c rn" style="left:0px;width:36px"><i class="cb"></i></div><div class="c num rn" style="left:36px;width:56px"><span>10</span></div><div class="c" style="left:92px;width:99px"><span>水产公司支部</span></div><div class="c" style="left:191px;width:99px"><span>白毅龙</span></div><div class="c" style="left:290px;width:99px"><span>男</span></div><div class="c num" style="left:389px;width:99px"><span>1959-10-20</span></div><div class="c" style="left:488px;width:99px"><span></span></div><div class="c id" style="left:587px;width:99px"><span></span></div><div class="c" style="left:686px;width:99px"><span>水产公司支部</span></div><div class="c num" style="left:785px;width:104px"><span>1981-10-04</span></div></div>
<div class="gr" style="top:253px"><div class="c rn" style="left:0px;width:36px"><i class="cb"></i></div><div class="c num rn" style="left:36px;width:56px"><span>11</span></div><div class="c" style="left:92px;width:99px"><span>元明粉三厂党支部</span></div><div class="c" style="left:191px;width:99px"><span>柏德琪</span></div><div class="c" style="left:290px;width:99px"><span>男</span></div><div class="c num" style="left:389px;width:99px"><span>1947-02-13</span></div><div class="c" style="left:488px;width:99px"><span></span></div><div class="c id" style="left:587px;width:99px"><span></span></div><div class="c" style="left:686px;width:99px"><span>元明粉三厂党支部</span></div><div class="c num" style="left:785px;width:104px"><span>1994-11-18</span></div></div>
<div class="gr" style="top:276px"><div class="c rn" style="left:0px;width:36px"><i class="cb"></i></div><div class="c num rn" style="left:36px;width:56px"><span>12</span></div><div class="c" style="left:92px;width:99px"><span>机关幼儿园支部</span></div><div class="c" style="left:191px;width:99px"><span>柏萍</span></div><div class="c" style="left:290px;width:99px"><span>女</span></div><div class="c num" style="left:389px;width:99px"><span>1970-03-15</span></div><div class="c" style="left:488px;width:99px"><span></span></div><div class="c id" style="left:587px;width:99px"><span></span></div><div class="c" style="left:686px;width:99px"><span>机关幼儿园支部</span></div><div class="c num" style="left:785px;width:104px"><span>2004-11-24</span></div></div>
<div class="gr" style="top:299px"><div class="c rn" style="left:0px;width:36px"><i class="cb"></i></div><div class="c num rn" style="left:36px;width:56px"><span>13</span></div><div class="c" style="left:92px;width:99px"><span>亨通手套帽业公司党支部</span></div><div class="c" style="left:191px;width:99px"><span>包敬明</span></div><div class="c" style="left:290px;width:99px"><span>男</span></div><div class="c num" style="left:389px;width:99px"><span>1962-05-26</span></div><div class="c" style="left:488px;width:99px"><span></span></div><div class="c id" style="left:587px;width:99px"><span></span></div><div class="c" style="left:686px;width:99px"><span>亨通手套帽业公司党支部</span></div><div class="c num" style="left:785px;width:104px"><span>2010-12-02</span></div></div>
<div class="gr" style="top:322px"><div class="c rn" style="left:0px;width:36px"><i class="cb"></i></div><div class="c num rn" style="left:36px;width:56px"><span>14</span></div><div class="c" style="left:92px;width:99px"><span>研修一部</span></div><div class="c" style="left:191px;width:99px"><span>包立勇</span></div><div class="c" style="left:290px;width:99px"><span>男</span></div><div class="c num" style="left:389px;width:99px"><span>1956-11-08</span></div><div class="c" style="left:488px;width:99px"><span></span></div><div class="c id" style="left:587px;width:99px"><span></span></div><div class="c" style="left:686px;width:99px"><span>研修一部</span></div><div class="c num" style="left:785px;width:104px"><span>1983-06-28</span></div></div>
<div class="gr" style="top:345px"><div class="c rn" style="left:0px;width:36px"><i class="cb"></i></div><div class="c num rn" style="left:36px;width:56px"><span>15</span></div><div class="c" style="left:92px;width:99px"><span>新庄党支部</span></div><div class="c" style="left:191px;width:99px"><span>包立洲</span></div><div class="c" style="left:290px;width:99px"><span>男</span></div><div class="c num" style="left:389px;width:99px"><span>1971-02-17</span></div><div class="c" style="left:488px;width:99px"><span></span></div><div class="c id" style="left:587px;width:99px"><span></span></div><div class="c" style="left:686px;width:99px"><span>新庄党支部</span></div><div class="c num" style="left:785px;width:104px"><span>1991-10-01</span></div></div>
<div class="gr" style="top:368px"><div class="c rn" style="left:0px;width:36px"><i class="cb"></i></div><div class="c num rn" style="left:36px;width:56px"><span>16</span></div><div class="c" style="left:92px;width:99px"><span>机关第一支部</span></div><div class="c" style="left:191px;width:99px"><span>包南庆</span></div><div class="c" style="left:290px;width:99px"><span>男</span></div><div class="c num" style="left:389px;width:99px"><span>1985-10-02</span></div><div class="c" style="left:488px;width:99px"><span></span></div><div class="c id" style="left:587px;width:99px"><span>320882198510024613</span></div><div class="c" style="left:686px;width:99px"><span>机关第一支部</span></div><div class="c num" style="left:785px;width:104px"><span>2007-06-10</span></div></div>
<div class="gr" style="top:391px"><div class="c rn" style="left:0px;width:36px"><i class="cb"></i></div><div class="c num rn" style="left:36px;width:56px"><span>17</span></div><div class="c" style="left:92px;width:99px"><span>街南村党支部</span></div><div class="c" style="left:191px;width:99px"><span>包义明</span></div><div class="c" style="left:290px;width:99px"><span>男</span></div><div class="c num" style="left:389px;width:99px"><span>1951-10-03</span></div><div class="c" style="left:488px;width:99px"><span></span></div><div class="c id" style="left:587px;width:99px"><span></span></div><div class="c" style="left:686px;width:99px"><span>街南村党支部</span></div><div class="c num" style="left:785px;width:104px"><span>1979-10-04</span></div></div>
</div>
<div id="pager">
<div style="left:6px;top:8px;width:12px;height:14px"><svg width="12" height="14" viewBox="0 0 12 14"><path d="M0.8,0.8 H3.2 V5.2 L10.2,0.8 V13.2 L3.2,8.8 V13.2 H0.8Z" fill="#dcdcdc" stroke="#a8a8a8" stroke-width="1"/></svg></div>
<div style="left:26px;top:8px;width:9px;height:14px"><svg width="9" height="14" viewBox="0 0 9 14"><path d="M0.8,7 L7.8,0.8 V13.2Z" fill="#dcdcdc" stroke="#a8a8a8" stroke-width="1"/></svg></div>
<span style="left:40px;top:9px;font-size:12px;line-height:14px;color:#222">第</span>
<div style="left:61px;top:7px;width:31px;height:19px;background:#fff;border:1px solid #b8c8dc;border-right-color:#e8eef6;border-bottom-color:#e8eef6"><span style="left:3px;top:2px;font-family:'Liberation Mono',monospace;font-size:12px;line-height:14px">1</span></div>
<span style="left:100px;top:9px;font-size:12px;line-height:14px;color:#222;white-space:nowrap">页，共</span>
<span style="left:145px;top:9px;font-family:"Liberation Mono",monospace;font-size:12px;line-height:14px;color:#222;letter-spacing:0.2px">1248</span>
<span style="left:181px;top:9px;font-size:12px;line-height:14px;color:#222;white-space:nowrap">页</span>
<div style="left:201px;top:8px;width:9px;height:14px"><svg width="9" height="14" viewBox="0 0 9 14"><defs><linearGradient id="pb" x1="0" y1="0" x2="0" y2="1"><stop offset="0" stop-color="#8cc0f8"/><stop offset="1" stop-color="#2a70d8"/></linearGradient></defs><path d="M8.2,7 L1.2,0.8 V13.2Z" fill="url(#pb)" stroke="#2464c4" stroke-width="1"/></svg></div>
<div style="left:218px;top:8px;width:12px;height:14px"><svg width="12" height="14" viewBox="0 0 12 14"><path d="M11.2,0.8 H8.8 V5.2 L1.8,0.8 V13.2 L8.8,8.8 V13.2 H11.2Z" fill="url(#pb)" stroke="#2464c4" stroke-width="1"/></svg></div>
<div style="left:235px;top:7px;width:15px;height:15px"><svg width="15" height="15" viewBox="0 0 15 15"><path d="M2.5 8 A5 5 0 0 1 11 3.5" fill="none" stroke="#9ab8e0" stroke-width="2.2"/><path d="M12.5 7 A5 5 0 0 1 4 11.5" fill="none" stroke="#9ab8e0" stroke-width="2.2"/><path d="M9 1 L13 3.5 L9.5 6Z M6 14 L2 11.5 L5.5 9Z" fill="#9ab8e0"/></svg></div>
</div>

<div id="rline"></div><div id="cream"></div><div id="bcream"></div><div id="frame"></div>
</body></html>
